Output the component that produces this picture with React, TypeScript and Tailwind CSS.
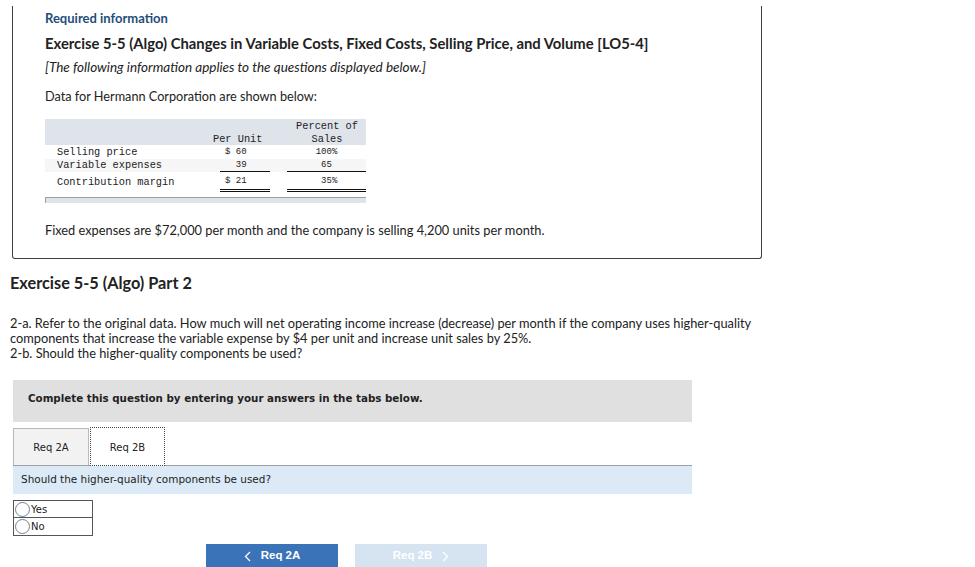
import React from "react";

const sans = "font-['Lato','Liberation_Sans',sans-serif]";
const verdana = "font-['DejaVu_Sans','Liberation_Sans',sans-serif]";
const mono = "font-['Liberation_Mono','Courier_New',monospace]";

// ─── Data table ───────────────────────────────────────────────────────────────

function DataTable() {
  return (
    <div className={`${mono} w-[321px] text-[#222]`}>
      {/* header */}
      <div className="flex h-[26px] items-start bg-[#dfe4ea] pt-[1px] text-[10.3px] leading-[13px]">
        <div className="w-[168px]" />
        <div className="mt-[13px] w-[75px] whitespace-nowrap">Per Unit</div>
        <div className="w-[78px] text-center">
          Percent of
          <br />
          Sales
        </div>
      </div>

      {/* rows */}
      <div className="flex h-[14px] items-center pt-[2px]">
        <div className="w-[175px] pl-[12px] text-[10.3px]">Selling price</div>
        <div className="w-[50px] whitespace-pre pl-[5px] text-[9px]">$ 60</div>
        <div className="w-[17px]" />
        <div className="w-[79px] whitespace-pre text-center text-[9px]">100%</div>
      </div>
      <div className="flex h-[13px] bg-[#f6f6f6]">
        <div className="flex w-[175px] items-center pl-[12px] pt-[1px] text-[10.3px]">Variable expenses</div>
        <div className="flex w-[50px] items-center whitespace-pre border-b border-[#111] pl-[5px] pt-[1px] text-[9px]">
          {"  39"}
        </div>
        <div className="w-[17px]" />
        <div className="flex w-[79px] items-center justify-center whitespace-pre border-b border-[#111] pt-[1px] text-[9px]">
          {" 65 "}
        </div>
      </div>
      <div className="flex h-[20px]">
        <div className="flex w-[175px] items-center pl-[12px] pt-[2px] text-[10.3px]">Contribution margin</div>
        <div className="flex w-[50px] items-center whitespace-pre border-b-[3px] border-double border-[#111] pl-[5px] pt-[2px] text-[9px]">
          $ 21
        </div>
        <div className="w-[17px]" />
        <div className="flex w-[79px] items-center justify-center whitespace-pre border-b-[3px] border-double border-[#111] pt-[2px] text-[9px]">
          {" 35%"}
        </div>
      </div>

      {/* footer bar */}
      <div className="mt-[5px] h-[6px] border-l border-t border-[#9aa0a6] bg-[#dfe4ea]" />
    </div>
  );
}

// ─── App ──────────────────────────────────────────────────────────────────────

export default function App() {
  return (
    <div className={`${sans} min-h-[567px] w-[975px] overflow-hidden bg-white text-[#222]`}>
      {/* Required information card */}
      <div className="ml-[12px] mt-[6px] w-[750px] rounded-b-[3px] border-x border-b border-[#3b4048] pb-[20px] pl-[32px]">
        <div className="pt-[4px] text-[13px] font-bold leading-[16px] text-[#1f4e7a]">Required information</div>
        <div className="mt-[7px] whitespace-nowrap text-[14.8px] font-bold leading-[20px]">
          Exercise 5-5 (Algo) Changes in Variable Costs, Fixed Costs, Selling Price, and Volume [LO5-4]
        </div>
        <div className="mt-[6px] text-[13.5px] italic leading-[16px]">
          [The following information applies to the questions displayed below.]
        </div>
        <div className="mt-[13px] text-[12.7px] leading-[16px]">Data for Hermann Corporation are shown below:</div>

        <div className="mt-[15px]">
          <DataTable />
        </div>

        <div className="mt-[19px] text-[12.8px] leading-[16px]">
          Fixed expenses are $72,000 per month and the company is selling 4,200 units per month.
        </div>
      </div>

      {/* Part 2 */}
      <div className="ml-[10px] mt-[14px] text-[16.3px] font-bold leading-[20px]">Exercise 5-5 (Algo) Part 2</div>

      <div className="ml-[10px] mt-[23px] whitespace-nowrap text-[12.8px] leading-[15px]">
        2-a. Refer to the original data. How much will net operating income increase (decrease) per month if the
        company uses higher-quality
        <br />
        components that increase the variable expense by $4 per unit and increase unit sales by 25%.
        <br />
        2-b. Should the higher-quality components be used?
      </div>

      <div className="ml-[13px] mt-[19px] w-[679px]">
        {/* instruction box */}
        <div className={`${verdana} h-[42px] bg-[#e0e0e0] pl-[15px] pt-[11px] text-[10.3px] font-bold leading-[14px]`}>
          Complete this question by entering your answers in the tabs below.
        </div>

        {/* tabs */}
        <div className={`${verdana} mt-[6px] flex h-[38px] items-end border-b border-[#a0a0a0] text-[10px]`}>
          <div className="flex h-[37px] w-[76px] items-center justify-center border-x border-t border-[#b9b9b9] bg-[#f2f2f2] pt-[1px]">
            Req 2A
          </div>
          <div className="-mb-px ml-px flex h-[39px] w-[75px] items-center justify-center border border-dotted border-[#444] bg-white pt-[1px]">
            Req 2B
          </div>
        </div>

        <div className={`${verdana} flex h-[28px] items-center bg-[#dbeaf6] pl-[8px] text-[10.45px]`}>
          Should the higher-quality components be used?
        </div>

        {/* radio options */}
        <div className={`${verdana} mt-[6px] w-[80px] border border-[#555] text-[10px]`}>
          {["Yes", "No"].map((opt, i) => (
            <label
              key={opt}
              className={`flex h-[17px] items-center ${i === 0 ? "border-b border-[#555]" : ""}`}
            >
              <span className="ml-[1px] mr-[1px] inline-block h-[15px] w-[15px] rounded-full border border-[#6f7f96] bg-white" />
              {opt}
            </label>
          ))}
        </div>
      </div>

      {/* nav buttons */}
      <div className="ml-[206px] mt-[8px] flex gap-[17px] font-['Liberation_Sans',Arial,sans-serif] text-[11.5px] font-bold">
        <button className="flex h-[24px] w-[132px] items-center justify-center gap-[10px] bg-[#3b73b9] text-white">
          <svg width="7" height="11" viewBox="0 0 7 11" fill="none">
            <path d="M6 1L1.5 5.5L6 10" stroke="white" strokeWidth="1.3" />
          </svg>
          Req 2A
        </button>
        <button className="flex h-[24px] w-[132px] items-center justify-center gap-[10px] bg-[#d6e3f1] text-white">
          Req 2B
          <svg width="7" height="11" viewBox="0 0 7 11" fill="none">
            <path d="M1 1L5.5 5.5L1 10" stroke="white" strokeWidth="1.3" />
          </svg>
        </button>
      </div>
    </div>
  );
}
